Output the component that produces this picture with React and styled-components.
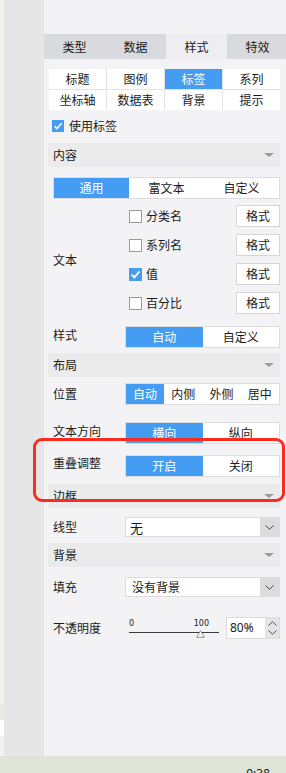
import React from 'react';
import styled, { createGlobalStyle } from 'styled-components';

const Global = createGlobalStyle`
  html, body { margin: 0; padding: 0; }
  body {
    font-family: "Noto Sans CJK SC", "Noto Sans", sans-serif;
    font-size: 12px;
    color: #1b1b1b;
    width: 286px;
    height: 773px;
    overflow: hidden;
  }
  * { box-sizing: border-box; }
`;

const BLUE = '#459cf3';

const Screen = styled.div`
  position: relative;
  width: 286px;
  height: 773px;
  display: flex;
  flex-direction: column;
  overflow: hidden;
`;
const Main = styled.div`
  display: flex;
  height: 756px;
`;
const EdgeStrip = styled.div`
  width: 4px;
  flex: none;
  background: linear-gradient(
    to bottom,
    #f3f3ee 0, #f3f3ee 703px,
    #e9eae2 703px, #e9eae2 720px,
    #ffffff 720px, #ffffff 736px,
    #f1f1f1 736px
  );
`;
const Sidebar = styled.div`
  width: 40px;
  flex: none;
  background: #e6e6e6;
`;
const Panel = styled.div`
  flex: 1;
  min-width: 0;
  background: #f3f3f5;
  padding-top: 34px;
  overflow: hidden;
`;
const TabBar = styled.div`
  display: grid;
  grid-template-columns: repeat(4, 61px);
  height: 25px;
`;
const Tab = styled.div`
  background: ${p => (p.$active ? '#eeeef1' : '#d9dadd')};
  display: flex;
  align-items: center;
  justify-content: center;
  line-height: 1;
`;
const Body = styled.div`
  padding: 0 6px 0 4px;
`;
const SubGrid = styled.div`
  margin: 10px 0 0 1px;
  display: grid;
  grid-template-columns: repeat(4, 1fr);
  gap: 1px;
  background: #e3e3e5;
`;
const SubTab = styled.div`
  height: 20px;
  display: flex;
  align-items: center;
  justify-content: center;
  line-height: 1;
  background: ${p => (p.$active ? BLUE : '#ffffff')};
  color: ${p => (p.$active ? '#ffffff' : '#1b1b1b')};
`;
const CheckLine = styled.label`
  display: flex;
  align-items: center;
  gap: 5px;
  height: 12px;
  margin: 10px 0 0 4px;
  line-height: 1;
`;
const Box = styled.span`
  width: ${p => p.$size}px;
  height: ${p => p.$size}px;
  flex: none;
  display: inline-flex;
  align-items: center;
  justify-content: center;
  background: ${p => (p.$checked ? BLUE : '#ffffff')};
  border: ${p => (p.$checked ? 'none' : '1px solid #9a9a9a')};
`;
const Header = styled.div`
  margin-top: ${p => p.$mt}px;
  height: 24px;
  background: #ebebeb;
  display: flex;
  align-items: center;
  justify-content: space-between;
  padding: 0 6px 0 5px;
  line-height: 1;
`;
const Caret = styled.span`
  width: 0;
  height: 0;
  border-left: 5px solid transparent;
  border-right: 5px solid transparent;
  border-top: 4px solid #9b9b9b;
`;
const Rows = styled.div`
  padding-left: 5px;
`;
const Seg = styled.div`
  margin-top: ${p => p.$mt || 0}px;
  height: 22px;
  width: ${p => (p.$w ? `${p.$w}px` : '100%')};
  display: grid;
  grid-template-columns: repeat(${p => p.$n}, 1fr);
  border: 1px solid #dcdcde;
  background: #ffffff;
  flex: none;
`;
const SegItem = styled.div`
  display: flex;
  align-items: center;
  justify-content: center;
  line-height: 1;
  background: ${p => (p.$active ? BLUE : 'transparent')};
  color: ${p => (p.$active ? '#ffffff' : '#1b1b1b')};
`;
const Row = styled.div`
  margin-top: ${p => p.$mt}px;
  display: flex;
  align-items: center;
`;
const Label = styled.div`
  width: 72px;
  flex: none;
  line-height: 1;
  padding-bottom: ${p => p.$lift || 0}px;
`;
const Options = styled.div`
  flex: 1;
  display: flex;
  flex-direction: column;
  gap: 7px;
`;
const OptionRow = styled.div`
  height: 22px;
  display: flex;
  align-items: center;
  padding-left: 4px;
  line-height: 1;
`;
const OptionText = styled.span`
  margin-left: 4px;
`;
const FormatBtn = styled.div`
  margin-left: auto;
  width: 44px;
  height: 22px;
  border: 1px solid #d6d6d8;
  background: #ffffff;
  display: flex;
  align-items: center;
  justify-content: center;
`;
const Select = styled.div`
  width: 155px;
  height: 20px;
  border: 1px solid #dcdcde;
  background: #ffffff;
  display: flex;
  align-items: stretch;
  line-height: 1;
`;
const SelectText = styled.div`
  flex: 1;
  display: flex;
  align-items: center;
  padding-left: ${p => p.$pad}px;
  font-size: ${p => p.$fs || 12}px;
`;
const SelectBtn = styled.div`
  width: 19px;
  background: #dcdcde;
  display: flex;
  align-items: center;
  justify-content: center;
`;
const Slider = styled.div`
  position: relative;
  width: 90px;
  height: 22px;
  margin-left: 4px;
  flex: none;
`;
const Scale = styled.div`
  display: flex;
  justify-content: space-between;
  padding-right: 10px;
  padding-top: 2px;
  font-family: "DejaVu Sans", sans-serif;
  font-size: 8px;
  line-height: 9px;
  color: #222;
`;
const Track = styled.div`
  margin-top: 4px;
  height: 1px;
  background: #3a3a3a;
`;
const Thumb = styled.svg`
  position: absolute;
  left: 67px;
  top: 13px;
`;
const Spin = styled.div`
  margin-left: 7px;
  width: 54px;
  height: 22px;
  border: 1px solid #dcdcde;
  background: #ffffff;
  display: flex;
`;
const SpinValue = styled.div`
  flex: 1;
  display: flex;
  align-items: center;
  padding-left: 3px;
  font-family: "Noto Sans", "Liberation Sans", sans-serif;
  font-size: 12px;
  line-height: 1;
`;
const SpinBtns = styled.div`
  width: 14px;
  background: #e4e4e6;
  display: flex;
  flex-direction: column;
  align-items: center;
  justify-content: space-around;
  padding: 1px 0;
`;
const Taskbar = styled.div`
  height: 17px;
  background: #dee4d6;
  display: flex;
  justify-content: flex-end;
  padding: 12px 16px 0 0;
  font-family: "Noto Sans", "Liberation Sans", sans-serif;
  font-size: 12px;
  line-height: 12px;
  color: #222;
  overflow: hidden;
`;
const Highlight = styled.div`
  position: absolute;
  left: 33px;
  top: 438px;
  width: 252px;
  height: 64px;
  border: 3px solid #fb2b20;
  border-radius: 9px;
  pointer-events: none;
`;

const Check = ({ checked, size = 12 }) => (
  <Box $checked={checked} $size={size}>
    {checked && (
      <svg width={size - 2} height={size - 2} viewBox="0 0 10 10">
        <path d="M1.6 5.2 L4 7.6 L8.6 2.2" fill="none" stroke="#fff" strokeWidth="1.6" />
      </svg>
    )}
  </Box>
);

const Chevron = ({ up, w = 9, h = 5, color = '#444' }) => (
  <svg width={w} height={h} viewBox="0 0 9 5">
    <path d={up ? 'M0.5 4.5 L4.5 0.7 L8.5 4.5' : 'M0.5 0.5 L4.5 4.3 L8.5 0.5'} fill="none" stroke={color} strokeWidth="1" />
  </svg>
);

const Segmented = ({ items, active, n, w, mt }) => (
  <Seg $n={n || items.length} $w={w} $mt={mt}>
    {items.map((t, i) => (
      <SegItem key={t} $active={i === active}>{t}</SegItem>
    ))}
  </Seg>
);

export default function App() {
  return (
    <Screen>
      <Global />
      <Main>
        <EdgeStrip />
        <Sidebar />
        <Panel>
          <TabBar>
            <Tab>类型</Tab>
            <Tab>数据</Tab>
            <Tab $active>样式</Tab>
            <Tab>特效</Tab>
          </TabBar>
          <Body>
            <SubGrid>
              {['标题', '图例', '标签', '系列', '坐标轴', '数据表', '背景', '提示'].map((t) => (
                <SubTab key={t} $active={t === '标签'}>{t}</SubTab>
              ))}
            </SubGrid>
            <CheckLine>
              <Check checked />
              使用标签
            </CheckLine>

            <Header $mt={11}>内容<Caret /></Header>
            <Rows>
              <Segmented items={['通用', '富文本', '自定义']} active={0} mt={10} />
              <Row $mt={6}>
                <Label>文本</Label>
                <Options>
                  {[['分类名', false], ['系列名', false], ['值', true], ['百分比', false]].map(([t, c]) => (
                    <OptionRow key={t}>
                      <Check checked={c} size={13} />
                      <OptionText>{t}</OptionText>
                      <FormatBtn>格式</FormatBtn>
                    </OptionRow>
                  ))}
                </Options>
              </Row>
              <Row $mt={12}>
                <Label $lift={4}>样式</Label>
                <Segmented items={['自动', '自定义']} active={0} w={155} />
              </Row>
            </Rows>

            <Header $mt={5}>布局<Caret /></Header>
            <Rows>
              <Row $mt={6}>
                <Label>位置</Label>
                <Segmented items={['自动', '内侧', '外侧', '居中']} active={0} w={155} />
              </Row>
              <Row $mt={17}>
                <Label $lift={4}>文本方向</Label>
                <Segmented items={['横向', '纵向']} active={0} w={155} />
              </Row>
              <Row $mt={11}>
                <Label $lift={6}>重叠调整</Label>
                <Segmented items={['开启', '关闭']} active={0} w={155} />
              </Row>
            </Rows>

            <Header $mt={7}>边框<Caret /></Header>
            <Rows>
              <Row $mt={9}>
                <Label>线型</Label>
                <Select>
                  <SelectText $pad={4} $fs={13}>无</SelectText>
                  <SelectBtn><Chevron /></SelectBtn>
                </Select>
              </Row>
            </Rows>

            <Header $mt={6}>背景<Caret /></Header>
            <Rows>
              <Row $mt={10}>
                <Label>填充</Label>
                <Select>
                  <SelectText $pad={6}>没有背景</SelectText>
                  <SelectBtn><Chevron /></SelectBtn>
                </Select>
              </Row>
              <Row $mt={20}>
                <Label $lift={0}>不透明度</Label>
                <Slider>
                  <Scale><span>0</span><span>100</span></Scale>
                  <Track />
                  <Thumb width="9" height="8" viewBox="0 0 9 8">
                    <path d="M4.5 0.8 L8.3 7.3 L0.7 7.3 Z" fill="#ffffff" stroke="#8c8c8c" strokeWidth="1" />
                  </Thumb>
                </Slider>
                <Spin>
                  <SpinValue>80%</SpinValue>
                  <SpinBtns>
                    <Chevron up w={9} h={5} color="#555" />
                    <Chevron w={9} h={5} color="#555" />
                  </SpinBtns>
                </Spin>
              </Row>
            </Rows>
          </Body>
        </Panel>
      </Main>
      <Taskbar>9:38</Taskbar>
      <Highlight />
    </Screen>
  );
}
